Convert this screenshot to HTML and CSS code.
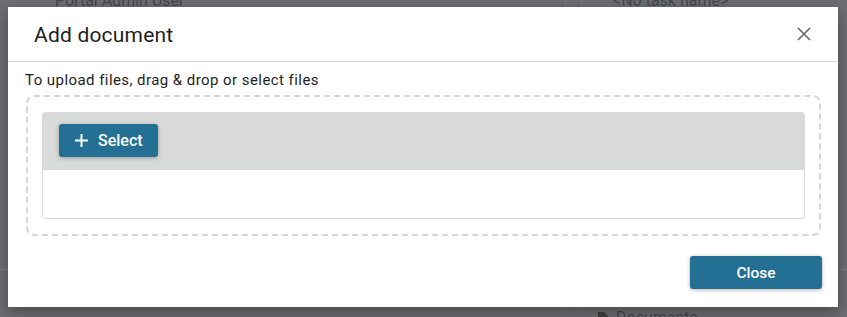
FILE: index.html
```html
<!DOCTYPE html>
<html>
<head>
<meta charset="utf-8">
<link rel="stylesheet" href="styles.css">
</head>
<body>
<div class="page">
  <div class="bg-top">
    <span class="bg-user">Portal Admin User</span>
    <span class="bg-col"></span>
    <span class="bg-col"></span>
    <span class="bg-task">&lt;No task name&gt;</span>
  </div>
  <div class="bg-rule"></div>
  <div class="bg-bottom">
    <span class="bg-col"></span>
    <span class="bg-col"></span>
    <span class="bg-docs"><svg width="10" height="12" viewBox="0 0 10 12"><path d="M0 0h6l4 4v8H0z" fill="#3e3e42"/></svg>Documents</span>
  </div>
</div>

<div class="overlay">
  <div class="dialog">
    <div class="dialog-header">
      <h1 class="dialog-title">Add document</h1>
      <button class="icon-close" aria-label="Close">
        <svg width="14" height="14" viewBox="0 0 14 14"><path d="M1 1L13 13M13 1L1 13" stroke="#666" stroke-width="1.6" fill="none"/></svg>
      </button>
    </div>
    <div class="dialog-body">
      <div class="hint">To upload files, drag &amp; drop or select files</div>
      <div class="dropzone">
        <div class="upload">
          <div class="upload-bar">
            <button class="btn btn-select">
              <svg width="13" height="13" viewBox="0 0 13 13"><path d="M6.5 0V13M0 6.5H13" stroke="#fff" stroke-width="2" fill="none"/></svg>
              <span>Select</span>
            </button>
          </div>
          <div class="upload-list"></div>
        </div>
      </div>
      <div class="actions">
        <button class="btn btn-close">Close</button>
      </div>
    </div>
  </div>
</div>
</body>
</html>
```

FILE: styles.css
```css
html, body {
  margin: 0;
  padding: 0;
  height: 100%;
  overflow: hidden;
}
body {
  background: #6e6e72;
  font-family: Roboto, "Liberation Sans", sans-serif;
  position: relative;
}
.page {
  color: #47474b;
  font-size: 16px;
}
.bg-top {
  display: flex;
  align-items: flex-start;
  height: 20px;
  margin-top: -9px;
}
.bg-user {
  margin-left: 55px;
  width: 510px;
}
.bg-col {
  width: 1px;
  height: 30px;
  background: #7a7a7e;
  margin-right: 15px;
}
.bg-task {
  margin-left: 16px;
}
.bg-rule {
  margin-top: 258px;
  height: 1px;
  background: #7c7c80;
}
.bg-bottom {
  display: flex;
  padding-left: 565px;
  padding-top: 10px;
}
.bg-docs {
  display: flex;
  gap: 8px;
  margin-left: 1px;
  margin-top: 28px;
  align-items: center;
}
.overlay {
  position: absolute;
  inset: 0;
}
.dialog {
  position: absolute;
  left: 8px;
  top: 7px;
  width: 830px;
  height: 300px;
  background: #fff;
  box-shadow: 0 5px 14px rgba(0,0,0,0.35);
  display: flex;
  flex-direction: column;
}
.dialog-header {
  height: 54px;
  border-bottom: 1px solid #dcdcdc;
  display: flex;
  align-items: center;
  justify-content: space-between;
  padding: 0 26px 0 26px;
}
.dialog-title {
  margin: 0;
  font-size: 21px;
  font-weight: 400;
  color: #1e1e1e;
  line-height: 26px;
  letter-spacing: 0.2px;
  padding-top: 1px;
}
.icon-close {
  border: 0;
  background: none;
  padding: 0;
  width: 14px;
  height: 14px;
  display: flex;
  margin-right: 1px;
}
.dialog-body {
  padding: 8px 16px 18px 17px;
  display: flex;
  flex-direction: column;
}
.hint {
  font-size: 15px;
  line-height: 20px;
  color: #1e1e1e;
  letter-spacing: 0.44px;
}
.dropzone {
  margin: 5px 1px 0 1px;
  height: 141px;
  box-sizing: border-box;
  border: 2px dashed #d6d6d6;
  border-radius: 8px;
  padding: 15px 14px;
}
.upload {
  height: 107px;
  box-sizing: border-box;
  border: 1px solid #dadada;
  border-radius: 3px;
  display: flex;
  flex-direction: column;
}
.upload-bar {
  background: #d9dbda;
  height: 57px;
  padding: 11px 16px 0;
  box-sizing: border-box;
}
.upload-list {
  flex: 1;
}
.btn {
  border: 0;
  border-radius: 3px;
  background: #246f94;
  color: #fff;
  font-family: Roboto, "Liberation Sans", sans-serif;
  font-weight: 500;
  box-shadow: 0 1px 4px rgba(0,0,0,0.3);
  cursor: pointer;
}
.btn-select {
  height: 33px;
  width: 99px;
  padding: 0 0 0 16px;
  display: flex;
  align-items: center;
  gap: 10px;
  font-size: 16px;
}
.actions {
  display: flex;
  justify-content: flex-end;
  margin-top: 20px;
}
.btn-close {
  width: 132px;
  height: 33px;
  font-size: 15.5px;
}
```
